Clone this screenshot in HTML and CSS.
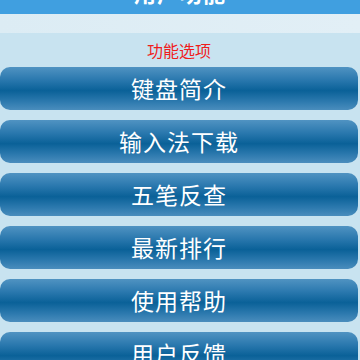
FILE: index.html
```html
<!DOCTYPE html>
<html lang="zh-CN">
<head>
    <meta charset="utf-8">
    <link rel="stylesheet" href="styles.css">
</head>
<body>
    <div class="header">用户功能</div>
    <div class="band"></div>

    <div class="panel">
        <div class="panel-title">功能选项</div>
        <div class="menu">
            <div class="menu-item">键盘简介</div>
            <div class="menu-item">输入法下载</div>
            <div class="menu-item">五笔反查</div>
            <div class="menu-item">最新排行</div>
            <div class="menu-item">使用帮助</div>
            <div class="menu-item">用户反馈</div>
        </div>
    </div>
</body>
</html>
```

FILE: styles.css
```css
body {
    margin: 0;
    font-family: "Noto Sans CJK SC", "Noto Sans", sans-serif;
    background: #c8e3f0;
    overflow: hidden;
}

.header {
    height: 44px;
    margin-top: -30px;
    background: #409fe0;
    color: white;
    font-size: 22px;
    font-weight: bold;
    line-height: 44px;
    text-align: center;
    letter-spacing: 1px;
}

.band {
    height: 19px;
    background: linear-gradient(90deg, #dcecf4, #e2eff6);
}

.panel {
    background: #c8e3f0;
    border-radius: 12px 12px 0 0;
    padding: 0 2px 0 0;
}

.panel-title {
    height: 34px;
    line-height: 34px;
    text-align: center;
    color: #f01c1c;
    font-size: 16px;
}

.menu {
    display: flex;
    flex-direction: column;
    gap: 10px;
}

.menu-item {
    height: 43px;
    line-height: 43px;
    border-radius: 10px;
    text-align: center;
    color: white;
    font-size: 23px;
    letter-spacing: 1px;
    background: linear-gradient(180deg, #5093c2 0%, #2a78ae 30%, #0a6198 55%, #2c79ae 80%, #4a8dbd 100%);
}
```
